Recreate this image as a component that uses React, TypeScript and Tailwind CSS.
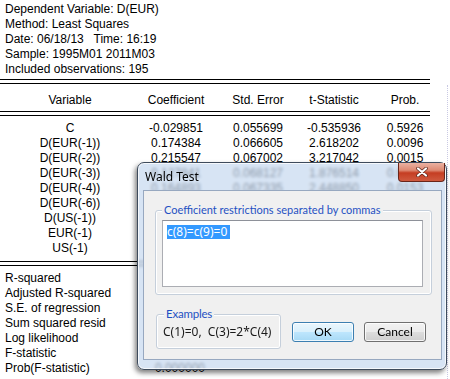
import React from "react";

const rows: string[][] = [
  ["C", "-0.029851", "0.055699", "-0.535936", "0.5926"],
  ["D(EUR(-1))", "0.174384", "0.066605", "2.618202", "0.0096"],
  ["D(EUR(-2))", "0.215547", "0.067002", "3.217042", "0.0015"],
  ["D(EUR(-3))", "0.127841", "0.068127", "1.876514", "0.0621"],
  ["D(EUR(-4))", "0.164893", "0.067335", "2.448850", "0.0153"],
  ["D(EUR(-6))", "-0.141756", "0.065118", "-2.176905", "0.0308"],
  ["D(US(-1))", "0.094312", "0.061458", "1.534577", "0.1266"],
  ["EUR(-1)", "-0.018236", "0.006872", "-2.653667", "0.0087"],
  ["US(-1)", "0.020615", "0.007921", "2.602512", "0.0100"],
];

const stats: string[][] = [
  ["R-squared", "0.163582"],
  ["Adjusted R-squared", "0.127605"],
  ["S.E. of regression", "0.931877"],
  ["Sum squared resid", "161.5204"],
  ["Log likelihood", "-257.1163"],
  ["F-statistic", "4.546763"],
  ["Prob(F-statistic)", "0.000000"],
];

function DoubleRule({ className }: { className: string }) {
  return <div className={`w-[430px] h-[5px] border-t border-b border-black ${className}`} />;
}

function Row({ cells }: { cells: string[] }) {
  return (
    <div className="grid grid-cols-[140px_72px_92px_60px_82px] leading-[15px] whitespace-nowrap">
      {cells.map((c, i) => (
        <div key={i} className="flex justify-center">
          <span>{c}</span>
        </div>
      ))}
    </div>
  );
}

function WaldDialog() {
  return (
    <div className="absolute left-[137px] top-[162px] w-[310px] h-[208px] rounded-[7px] border border-[#3e4b5c] bg-[rgba(198,216,240,0.7)] backdrop-blur-[1.5px] shadow-[inset_0_0_0_1px_rgba(255,255,255,0.75),-2px_3px_5px_rgba(0,0,0,0.5)] font-['Noto_Sans',sans-serif]">
      <div className="h-[27px] flex items-center pl-[7px] text-[12px] text-black">Wald Test</div>
      <div className="absolute right-[1px] top-0 w-[47px] h-[19px] rounded-b-[4px] border border-t-0 border-[#6a2519] bg-[linear-gradient(180deg,#eab1a2_0%,#de8a73_40%,#c53d22_55%,#cf5a3f_100%)] flex items-center justify-center">
        <svg width="12" height="10" viewBox="0 0 12 10">
          <path d="M2 1.5 L10 8.5 M10 1.5 L2 8.5" stroke="#5a2418" strokeWidth="3.6" strokeLinecap="round" />
          <path d="M2 1.5 L10 8.5 M10 1.5 L2 8.5" stroke="#ffffff" strokeWidth="2.2" strokeLinecap="round" />
        </svg>
      </div>
      <div className="ml-[5px] w-[299px] h-[170px] border border-[#97a8c0] bg-[#f0f0f0] flex flex-col">
        <div className="relative ml-[11px] mt-[19px] w-[277px] h-[85px] rounded-[3px] border border-[#c5cfdb] shadow-[inset_0_0_0_1px_#ffffff]">
          <span className="absolute left-[6px] top-[-9px] px-[2px] bg-[#f0f0f0] font-['Lato',sans-serif] text-[11px] leading-[16px] text-[#1f50c3] whitespace-nowrap">
            Coefficient restrictions separated by commas
          </span>
          <div className="ml-[6px] mt-[9px] w-[261px] h-[67px] border border-[#abadb3] border-t-[#8e9199] bg-white pl-[4px] pt-[2px]">
            <span className="bg-[#3399ff] text-white text-[12px] leading-[14px] inline-block pr-[3px]">c(8)=c(9)=0</span>
          </div>
        </div>
        <div className="flex items-start ml-[12px] mt-[19px]">
          <div className="relative w-[125px] h-[35px] rounded-[3px] border border-[#c5cfdb] shadow-[inset_0_0_0_1px_#ffffff]">
            <span className="absolute left-[7px] top-[-9px] px-[2px] bg-[#f0f0f0] font-['Lato',sans-serif] text-[11.5px] tracking-[-0.2px] leading-[16px] text-[#1f50c3]">
              Examples
            </span>
            <div className="pl-[6px] pt-[9px] text-[12px] leading-[16px] text-[#1a1a1a] whitespace-pre">C(1)=0,  C(3)=2*C(4)</div>
          </div>
          <button className="ml-[11px] mt-[8px] w-[62px] h-[20px] rounded-[3px] border border-[#3c7fb1] bg-[linear-gradient(180deg,#eaf6fd_0%,#d9f0fc_50%,#bee6fd_51%,#a7d9f5_100%)] shadow-[inset_0_0_0_1px_rgba(255,255,255,0.8)] font-['Lato',sans-serif] text-[12px] text-black flex items-center justify-center">
            OK
          </button>
          <button className="ml-[10px] mt-[8px] w-[62px] h-[20px] rounded-[3px] border border-[#707070] bg-[linear-gradient(180deg,#f2f2f2_0%,#ebebeb_50%,#dddddd_51%,#cfcfcf_100%)] shadow-[inset_0_0_0_1px_rgba(255,255,255,0.8)] font-['Lato',sans-serif] text-[12px] text-black flex items-center justify-center">
            Cancel
          </button>
        </div>
      </div>
    </div>
  );
}

export default function App() {
  return (
    <div className="relative w-[450px] h-[379px] bg-white overflow-hidden font-['Liberation_Sans',Arial,sans-serif] text-[12px] text-black">
      <div className="absolute left-[447px] top-[85px] bottom-0 border-l border-dotted border-[#c9c9e3]" />
      <div className="pt-[2px] pl-[5px] leading-[15px]">
        <div>Dependent Variable: D(EUR)</div>
        <div>Method: Least Squares</div>
        <div className="whitespace-pre">Date: 06/18/13   Time: 16:19</div>
        <div>Sample: 1995M01 2011M03</div>
        <div>Included observations: 195</div>
      </div>
      <DoubleRule className="mt-[2px]" />
      <div className="mt-[9px]">
        <Row cells={["Variable", "Coefficient", "Std. Error", "t-Statistic", "Prob."]} />
      </div>
      <DoubleRule className="mt-[3px]" />
      <div className="mt-[5px]">
        {rows.map((r, i) => (
          <Row key={i} cells={r} />
        ))}
      </div>
      <DoubleRule className="mt-[5px]" />
      <div className="mt-[5px] leading-[15px]">
        {stats.map((s, i) => (
          <div key={i} className="flex whitespace-nowrap">
            <div className="w-[140px] pl-[5px]">{s[0]}</div>
            <div className="w-[65px] text-right">{s[1]}</div>
          </div>
        ))}
      </div>
      <WaldDialog />
    </div>
  );
}
